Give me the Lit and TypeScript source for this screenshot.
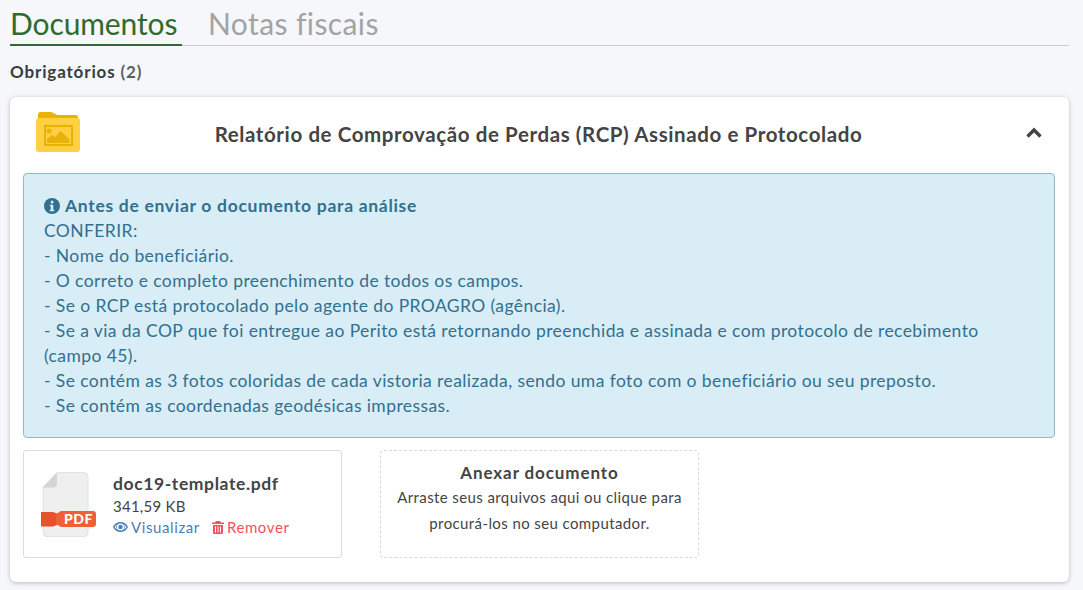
import { LitElement, html, css } from 'lit';
import { customElement } from 'lit/decorators.js';

const CHECKS = [
  '- Nome do beneficiário.',
  '- O correto e completo preenchimento de todos os campos.',
  '- Se o RCP está protocolado pelo agente do PROAGRO (agência).',
  '- Se a via da COP que foi entregue ao Perito está retornando preenchida e assinada e com protocolo de recebimento (campo 45).',
  '- Se contém as 3 fotos coloridas de cada vistoria realizada, sendo uma foto com o beneficiário ou seu preposto.',
  '- Se contém as coordenadas geodésicas impressas.',
];

@customElement('app-root')
export class AppRoot extends LitElement {
  static styles = css`
    :host {
      display: block;
      height: 590px;
      overflow: hidden;
      box-sizing: border-box;
      padding: 0 14px 0 10px;
      background: #f5f7fb;
      color: #444;
      font-family: Lato, 'Noto Sans', sans-serif;
    }

    .tabs {
      display: flex;
      height: 46px;
      border-bottom: 1px solid #c9cbce;
      box-sizing: border-box;
    }

    .tab {
      box-sizing: border-box;
      height: 46px;
      font-size: 30px;
      line-height: 46px;
      letter-spacing: 0.4px;
      color: #a3a3a3;
    }

    .tab.active {
      width: 172px;
      margin-right: 26px;
      letter-spacing: -0.1px;
      color: #2f6b30;
      border-bottom: 2px solid #2f6b30;
    }

    .section {
      margin: 14px 0 14px;
      height: 23px;
      font-size: 17px;
      line-height: 23px;
      font-weight: 700;
      letter-spacing: 0.85px;
      color: #3c3c3c;
    }

    .section span {
      color: #5d5d5d;
    }

    .card {
      box-sizing: border-box;
      height: 485px;
      padding: 0 14px 0 13px;
      background: #fff;
      border-radius: 6px;
      box-shadow: 0 1px 4px rgba(0, 0, 0, 0.25);
    }

    .head {
      box-sizing: border-box;
      display: flex;
      align-items: center;
      height: 76px;
      padding-bottom: 6px;
    }

    .folder {
      width: 44px;
      height: 40px;
      margin-left: 13px;
      flex: none;
    }

    .title {
      flex: 1;
      padding: 4px 29px 0 0;
      text-align: center;
      font-size: 20.5px;
      font-weight: 700;
      letter-spacing: 0.6px;
      color: #444;
    }

    .chevron {
      width: 16px;
      height: 11px;
      margin: 1px 13px 0 0;
      flex: none;
    }

    .alert {
      box-sizing: border-box;
      height: 265px;
      padding: 19px 20px 0;
      background: #d9edf7;
      border: 1px solid #97b6c6;
      border-radius: 4px;
      color: #31708f;
      font-size: 17.5px;
      line-height: 25px;
      letter-spacing: 0.41px;
    }

    .alert-title {
      display: flex;
      align-items: center;
      gap: 5px;
      font-weight: 700;
      letter-spacing: 0.7px;
    }

    .alert-title svg {
      width: 16px;
      height: 16px;
      flex: none;
    }

    .files {
      display: flex;
      gap: 38px;
      margin-top: 12px;
    }

    .file {
      box-sizing: border-box;
      display: flex;
      width: 319px;
      height: 108px;
      padding: 21px 0 0 17px;
      border: 1px solid #dcdcdc;
      border-radius: 3px;
    }

    .pdf {
      width: 56px;
      height: 66px;
      margin-right: 16px;
      flex: none;
    }

    .name {
      font-size: 17.5px;
      font-weight: 700;
      line-height: 24px;
      letter-spacing: 0.6px;
      color: #444;
    }

    .size {
      font-size: 15px;
      line-height: 20px;
      letter-spacing: 0.25px;
      color: #444;
    }

    .actions {
      display: flex;
      gap: 12px;
      font-size: 15px;
      line-height: 22px;
      letter-spacing: 0.6px;
    }

    .actions span {
      display: flex;
      align-items: center;
      gap: 3px;
    }

    .view {
      color: #4a7fb5;
    }

    .remove {
      color: #f4515c;
    }

    .eye {
      width: 15px;
      height: 12px;
    }

    .trash {
      width: 12px;
      height: 13px;
    }

    .drop {
      box-sizing: border-box;
      width: 319px;
      height: 108px;
      padding-top: 10px;
      border: 1px dashed #d8d8d8;
      border-radius: 4px;
      text-align: center;
      font-size: 15px;
      line-height: 25.5px;
      letter-spacing: 0.4px;
    }

    .drop strong {
      display: block;
      font-size: 17px;
      line-height: 24px;
      letter-spacing: 0.9px;
      color: #444;
    }
  `;

  render() {
    return html`
      <div class="tabs">
        <div class="tab active">Documentos</div>
        <div class="tab">Notas fiscais</div>
      </div>
      <div class="section">Obrigatórios <span>(2)</span></div>
      <div class="card">
        <div class="head">
          ${this.folderIcon()}
          <div class="title">Relatório de Comprovação de Perdas (RCP) Assinado e Protocolado</div>
          <svg class="chevron" viewBox="0 0 16 11">
            <path d="M1.500 9.500 8 3 14.500 9.500" fill="none" stroke="#444" stroke-width="3.400"></path>
          </svg>
        </div>
        <div class="alert">
          <div class="alert-title">
            <svg viewBox="0 0 16 16">
              <circle cx="8" cy="8" r="8" fill="#31708f"></circle>
              <rect x="6.800" y="2.800" width="2.600" height="2.600" rx="0.600" fill="#d9edf7"></rect>
              <path d="M5.800 6.700h3.500v5h1v1.600H5.800v-1.600h1v-3.400h-1z" fill="#d9edf7"></path>
            </svg>
            Antes de enviar o documento para análise
          </div>
          <div>CONFERIR:</div>
          ${CHECKS.map((line) => html`<div>${line}</div>`)}
        </div>
        <div class="files">
          <div class="file">
            ${this.pdfIcon()}
            <div>
              <div class="name">doc19-template.pdf</div>
              <div class="size">341,59 KB</div>
              <div class="actions">
                <span class="view">
                  <svg class="eye" viewBox="0 0 15 12">
                    <path fill-rule="evenodd" fill="#4a7fb5" d="M0 6c1.500-3.400 4.200-5 7.500-5s6 1.600 7.500 5c-1.500 3.400-4.200 5-7.500 5S1.500 9.400 0 6zm7.500 3.600a3.600 3.600 0 1 0 0-7.200 3.600 3.600 0 0 0 0 7.200zM1.500 6c.8 1.300 1.700 2.200 2.800 2.800a4.500 4.500 0 0 1 0-5.600C3.200 3.800 2.300 4.700 1.500 6zm12 0c-.8-1.300-1.700-2.200-2.800-2.800a4.500 4.500 0 0 1 0 5.600c1.100-.6 2-1.500 2.800-2.800z"></path>
                    <circle cx="7.500" cy="6" r="2.200" fill="#4a7fb5"></circle>
                  </svg>
                  Visualizar
                </span>
                <span class="remove">
                  <svg class="trash" viewBox="0 0 12 13">
                    <path fill-rule="evenodd" fill="#f4515c" d="M4 0h4l1 1.500h3V3H0V1.500h3zM1 4h10v7.500A1.500 1.500 0 0 1 9.500 13h-7A1.500 1.500 0 0 1 1 11.500zm2 1.500v6h1v-6zm2.500 0v6h1v-6zm2.500 0v6h1v-6z"></path>
                  </svg>
                  Remover
                </span>
              </div>
            </div>
          </div>
          <div class="drop">
            <strong>Anexar documento</strong>
            Arraste seus arquivos aqui ou clique para<br />procurá-los no seu computador.
          </div>
        </div>
      </div>
    `;
  }

  private folderIcon() {
    return html`
      <svg class="folder" viewBox="0 0 44 40">
        <path d="M2 2.500A2.500 2.500 0 0 1 4.500 0h11l6 3h18.500a2 2 0 0 1 2 2v4H2z" fill="#e9b208"></path>
        <path d="M0 9A3 3 0 0 1 3 6h38a3 3 0 0 1 3 3v28a3 3 0 0 1-3 3H3a3 3 0 0 1-3-3z" fill="#ffd043"></path>
        <rect x="9" y="14" width="27" height="19" fill="none" stroke="#e9b208" stroke-width="2"></rect>
        <circle cx="13" cy="19" r="2.500" fill="#e9b208"></circle>
        <path d="M11 31v-4l5-4 3 2 5.500-6 9 8v4z" fill="#e9b208"></path>
      </svg>
    `;
  }

  private pdfIcon() {
    return html`
      <svg class="pdf" viewBox="0 0 56 66">
        <path d="M16 .5h27a4 4 0 0 1 4 4v56a4 4 0 0 1-4 4H6a4 4 0 0 1-4-4V15z" fill="#efefef" stroke="#e2e2e2"></path>
        <path d="M16 .5v11a4 4 0 0 1-4 4H2z" fill="#d4d4d4"></path>
        <path d="M0 40h12l4 1.500V53l-4 1.500H0z" fill="#e8522a"></path>
        <path d="M15 42 20 39h32a3 3 0 0 1 3 3v10a3 3 0 0 1-3 3H20l-5-3z" fill="#ef5f38"></path>
        <text x="23" y="52" font-family="Lato, sans-serif" font-size="14" font-weight="900" letter-spacing="0.5" fill="#fff">PDF</text>
      </svg>
    `;
  }
}
